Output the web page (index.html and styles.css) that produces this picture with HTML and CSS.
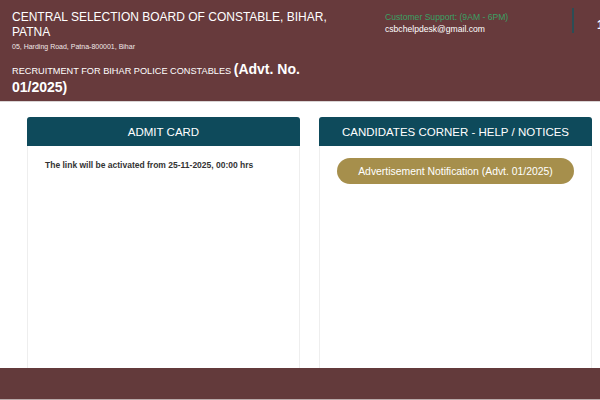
FILE: index.html
```html
<!DOCTYPE html>
<html>
<head>
<meta charset="utf-8">
<link rel="stylesheet" href="styles.css">
</head>
<body>
<header class="top">
  <div class="brand">
    <h1 class="title">CENTRAL SELECTION BOARD OF CONSTABLE, BIHAR, PATNA</h1>
    <p class="address">05, Harding Road, Patna-800001, Bihar</p>
    <p class="recruit">RECRUITMENT FOR BIHAR POLICE CONSTABLES <b class="advt">(Advt. No. 01/2025)</b></p>
  </div>
  <div class="support">
    <div class="support-label">Customer Support: (9AM - 6PM)</div>
    <div class="support-mail">csbchelpdesk@gmail.com</div>
  </div>
  <div class="divider"></div>
  <div class="edge">1</div>
</header>
<main class="cards">
  <section class="card">
    <div class="card-head">ADMIT CARD</div>
    <div class="card-body">
      <p class="notice">The link will be activated from 25-11-2025, 00:00 hrs</p>
    </div>
  </section>
  <section class="card">
    <div class="card-head">CANDIDATES CORNER - HELP / NOTICES</div>
    <div class="card-body center">
      <a class="pill">Advertisement Notification (Advt. 01/2025)</a>
    </div>
  </section>
</main>
<footer class="bottom"></footer>
</body>
</html>
```
FILE: styles.css
```css
* { box-sizing: border-box; }
html, body { margin: 0; padding: 0; }
body {
  width: 600px;
  height: 400px;
  overflow: hidden;
  font-family: "Liberation Sans", Arial, sans-serif;
  background: #fff;
  display: flex;
  flex-direction: column;
}
.top {
  height: 102px;
  flex: none;
  background: #673a3c;
  display: flex;
  align-items: flex-start;
  padding: 10px 0 0 12px;
  border-bottom: 1px solid #d9d4d4;
}
.brand { width: 340px; flex: none; }
.title {
  margin: 0;
  font-size: 12px;
  font-weight: normal;
  line-height: 15px;
  color: #fff;
  width: 330px;
}
.address {
  margin: 3px 0 0;
  font-size: 7px;
  color: #f1e8e8;
}
.recruit {
  margin: 11px 0 0;
  font-size: 9.2px;
  line-height: 16px;
  color: #fff;
  width: 300px;
}
.advt { font-size: 14px; font-weight: bold; }
.support {
  margin-left: 33px;
  padding-top: 1px;
  width: 187px;
  flex: none;
}
.support-label { font-size: 8.6px; color: #3ba064; line-height: 12px; }
.support-mail { font-size: 8.6px; color: #fff; line-height: 12px; }
.divider {
  width: 2px;
  height: 25px;
  margin-top: -2px;
  background: #2c4d55;
  flex: none;
}
.edge {
  margin-left: 23px;
  margin-top: 8px;
  color: #fff;
  font-weight: bold;
  font-size: 12px;
}
.cards {
  flex: 1;
  display: flex;
  gap: 19px;
  padding: 15px 8px 0 27px;
  overflow: hidden;
}
.card {
  width: 273px;
  flex: none;
  border: 1px solid #eeeeee;
  border-bottom: none;
  border-radius: 3px 3px 0 0;
  display: flex;
  flex-direction: column;
}
.card-head {
  margin: -1px -1px 0;
  height: 29px;
  background: #0e4a5b;
  color: #fff;
  border-radius: 3px 3px 0 0;
  font-size: 11.5px;
  display: flex;
  align-items: center;
  justify-content: center;
}
.card-body { flex: 1; padding: 14px 17px; }
.card-body.center { display: flex; justify-content: center; align-items: flex-start; padding-top: 12px; }
.notice {
  margin: 0;
  font-size: 8.5px;
  font-weight: bold;
  color: #333;
}
.pill {
  display: flex;
  align-items: center;
  justify-content: center;
  width: 239px;
  height: 26px;
  border-radius: 13px;
  background: #a68f4c;
  color: #fff;
  font-size: 10.4px;
}
.bottom {
  height: 32px;
  flex: none;
  background: #633a3b;
  border-bottom: 1px solid #b9aaaa;
}
```
